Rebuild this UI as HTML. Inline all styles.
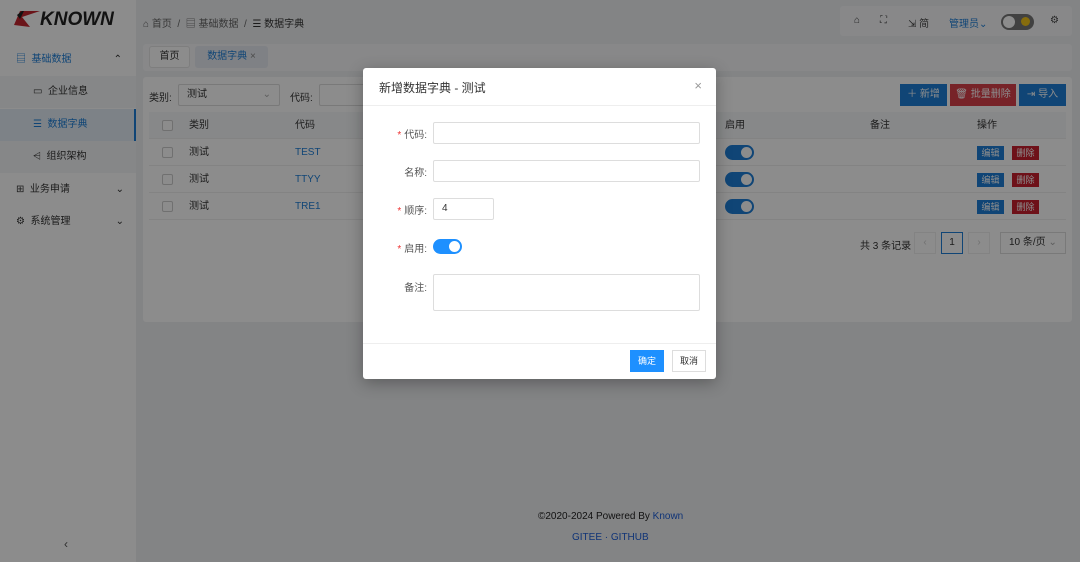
<!DOCTYPE html>
<html><head><meta charset="utf-8"><style>
*{box-sizing:border-box;margin:0;padding:0}
body{width:1080px;height:562px;overflow:hidden;position:relative;background:#eef0f3;font-family:"Liberation Sans","Noto Sans CJK SC",sans-serif;font-size:10px;color:#333}
.abs{position:absolute}
.side{left:0;top:0;width:136px;height:562px;background:#fff}
.menu{position:absolute;left:0;width:136px;height:32px;line-height:32px;font-size:10px;color:#333}
.blue{color:#1e7fd8}
.card{background:#fff;border-radius:3px}
.th,.tr{position:absolute;left:149px;width:917px;height:27px;border-bottom:1px solid #eee;line-height:27px}
.th{background:#f6f7f9}
.cb{position:absolute;left:13px;top:8px;width:11px;height:11px;border:1px solid #ccc;background:#fff;border-radius:2px}
.sw{position:absolute;width:29px;height:15px;border-radius:8px;background:#1e7fd8}
.sw::after{content:"";position:absolute;right:2px;top:2px;width:11px;height:11px;border-radius:50%;background:#fff}
.btn{position:absolute;color:#fff;font-size:9px;text-align:center}
.mask{left:0;top:0;width:1080px;height:562px;background:rgba(0,0,0,.45)}
.modal{left:363px;top:68px;width:353px;height:311px;background:#fff;border-radius:3px;box-shadow:0 4px 16px rgba(0,0,0,.3)}
.lbl{position:absolute;right:289px;font-size:10px;color:#555;white-space:nowrap}
.lbl b{color:#e33;font-weight:normal;margin-right:3px}
.inp{position:absolute;left:70px;height:22px;border:1px solid #ddd;border-radius:2px;background:#fff}
</style></head><body>
<div class="abs side">
 <div class="abs" style="left:14px;top:9px;font:italic bold 19px 'Liberation Sans',sans-serif;color:#222;letter-spacing:0">
 <svg width="26" height="16" viewBox="0 0 26 16" style="vertical-align:-2px"><polygon points="0,14 6,0 26,0 8,6 16,16" fill="#c4262e"/><polygon points="3,4 8,0 10,0 6,8" fill="#222"/></svg>KNOWN</div>
 <div class="menu blue" style="top:44px;padding-left:16px">▤&nbsp;&nbsp;基础数据<span style="position:absolute;right:14px;color:#333">⌃</span></div>
 <div class="menu" style="top:76px;padding-left:33px;background:#f5f6f7">▭&nbsp;&nbsp;企业信息</div>
 <div class="menu blue" style="top:109px;padding-left:33px;background:#e4edf6;border-right:2px solid #1e7fd8">☰&nbsp;&nbsp;数据字典</div>
 <div class="menu" style="top:141px;padding-left:33px;background:#f5f6f7">⩤&nbsp;&nbsp;组织架构</div>
 <div class="menu" style="top:174px;padding-left:16px">⊞&nbsp;&nbsp;业务申请<span style="position:absolute;right:12px">⌄</span></div>
 <div class="menu" style="top:206px;padding-left:16px">⚙&nbsp;&nbsp;系统管理<span style="position:absolute;right:12px">⌄</span></div>
 <div class="abs" style="left:64px;top:537px;font-size:12px;color:#555">‹</div>
</div>
<div class="abs" style="left:143px;top:15px;color:#666">⌂ 首页 &nbsp;/ &nbsp;▤ 基础数据 &nbsp;/ &nbsp;<span style="color:#333">☰ 数据字典</span></div>
<div class="abs card" style="left:840px;top:6px;width:232px;height:30px;background:#f7f8fa"></div>
<div class="abs" style="left:854px;top:15px;color:#444">⌂</div>
<div class="abs" style="left:880px;top:15px;color:#444">⛶</div>
<div class="abs" style="left:908px;top:15px;color:#444">⇲ 简</div>
<div class="abs blue" style="left:949px;top:15px">管理员⌄</div>
<div class="abs" style="left:1001px;top:14px;width:33px;height:16px;border-radius:8px;background:#777"><div style="position:absolute;left:2px;top:2px;width:12px;height:12px;border-radius:50%;background:#fff"></div><div style="position:absolute;right:4px;top:3px;width:9px;height:9px;border-radius:50%;background:#f5c518"></div></div>
<div class="abs" style="left:1050px;top:15px;color:#444">⚙</div>
<div class="abs card" style="left:143px;top:44px;width:929px;height:27px;background:#f7f8fa"></div>
<div class="abs" style="left:149px;top:46px;width:41px;height:22px;border:1px solid #e5e5e5;border-radius:3px;background:#fff;text-align:center;line-height:20px">首页</div>
<div class="abs blue" style="left:195px;top:46px;width:73px;height:22px;border-radius:3px;background:#e8ecf2;text-align:center;line-height:22px">数据字典 <span style="color:#888">×</span></div>
<div class="abs card" style="left:143px;top:77px;width:929px;height:245px"></div>
<div class="abs" style="left:149px;top:89px">类别:</div>
<div class="abs" style="left:178px;top:84px;width:102px;height:22px;border:1px solid #ddd;border-radius:2px;padding-left:8px;line-height:20px">测试<span style="position:absolute;right:8px;color:#aaa">⌄</span></div>
<div class="abs" style="left:290px;top:89px">代码:</div>
<div class="abs" style="left:319px;top:84px;width:60px;height:22px;border:1px solid #ddd;border-radius:2px"></div>
<div class="btn" style="left:900px;top:84px;width:47px;height:22px;line-height:22px;background:#1e7fd8;font-size:10px">＋ 新增</div>
<div class="btn" style="left:950px;top:84px;width:66px;height:22px;line-height:22px;background:#d9404a;font-size:10px">🗑 批量删除</div>
<div class="btn" style="left:1019px;top:84px;width:47px;height:22px;line-height:22px;background:#1e7fd8;font-size:10px">⇥ 导入</div>
<div class="th" style="top:112px"><div class="cb"></div><span class="abs" style="left:40px">类别</span><span class="abs" style="left:146px">代码</span><span class="abs" style="left:576px">启用</span><span class="abs" style="left:721px">备注</span><span class="abs" style="left:828px">操作</span></div>
<div class="tr" style="top:139px"><div class="cb"></div><span class="abs" style="left:40px">测试</span><span class="abs blue" style="left:146px">TEST</span><div class="sw" style="left:576px;top:6px"></div><div class="btn" style="left:828px;top:7px;width:27px;height:14px;line-height:14px;background:#1e7fd8">编辑</div><div class="btn" style="left:863px;top:7px;width:27px;height:14px;line-height:14px;background:#c8202e">删除</div></div>
<div class="tr" style="top:166px"><div class="cb"></div><span class="abs" style="left:40px">测试</span><span class="abs blue" style="left:146px">TTYY</span><div class="sw" style="left:576px;top:6px"></div><div class="btn" style="left:828px;top:7px;width:27px;height:14px;line-height:14px;background:#1e7fd8">编辑</div><div class="btn" style="left:863px;top:7px;width:27px;height:14px;line-height:14px;background:#c8202e">删除</div></div>
<div class="tr" style="top:193px"><div class="cb"></div><span class="abs" style="left:40px">测试</span><span class="abs blue" style="left:146px">TRE1</span><div class="sw" style="left:576px;top:6px"></div><div class="btn" style="left:828px;top:7px;width:27px;height:14px;line-height:14px;background:#1e7fd8">编辑</div><div class="btn" style="left:863px;top:7px;width:27px;height:14px;line-height:14px;background:#c8202e">删除</div></div>
<div class="abs" style="left:860px;top:237px">共 3 条记录</div>
<div class="abs" style="left:914px;top:232px;width:22px;height:22px;border:1px solid #eee;color:#ccc;text-align:center;line-height:20px">‹</div>
<div class="abs" style="left:941px;top:232px;width:22px;height:22px;border:1px solid #1e7fd8;text-align:center;line-height:20px">1</div>
<div class="abs" style="left:968px;top:232px;width:22px;height:22px;border:1px solid #eee;color:#ccc;text-align:center;line-height:20px">›</div>
<div class="abs" style="left:1000px;top:232px;width:66px;height:22px;border:1px solid #ddd;padding-left:8px;line-height:20px">10 条/页 <span style="color:#aaa">⌄</span></div>
<div class="abs" style="left:538px;top:511px;font-size:10px;color:#222">©2020-2024 Powered By <span style="color:#1e5fd8">Known</span></div>
<div class="abs" style="left:572px;top:532px;font-size:10px;color:#1e5fd8">GITEE · GITHUB</div>
<div class="abs mask"></div>
<div class="abs modal">
 <div class="abs" style="left:16px;top:11px;font-size:12px;color:#333">新增数据字典 - 测试</div>
 <div class="abs" style="right:14px;top:10px;font-size:13px;color:#999">×</div>
 <div class="abs" style="left:0;top:37px;width:353px;border-top:1px solid #eee"></div>
 <div class="lbl" style="top:58px"><b>*</b>代码:</div><div class="inp" style="top:54px;width:267px"></div>
 <div class="lbl" style="top:96px">名称:</div><div class="inp" style="top:92px;width:267px"></div>
 <div class="lbl" style="top:134px"><b>*</b>顺序:</div><div class="inp" style="top:130px;width:61px;padding-left:8px;line-height:20px;font-size:10px">4</div>
 <div class="lbl" style="top:172px"><b>*</b>启用:</div><div class="sw" style="left:70px;top:171px;background:#1e90ff"></div>
 <div class="lbl" style="top:211px">备注:</div><div class="inp" style="top:206px;width:267px;height:37px"></div>
 <div class="abs" style="left:0;top:275px;width:353px;border-top:1px solid #eee"></div>
 <div class="btn" style="left:267px;top:282px;width:34px;height:22px;line-height:22px;background:#1e90ff">确定</div>
 <div class="abs" style="left:309px;top:282px;width:34px;height:22px;line-height:20px;border:1px solid #ddd;text-align:center;font-size:9px">取消</div>
</div>
</body></html>
